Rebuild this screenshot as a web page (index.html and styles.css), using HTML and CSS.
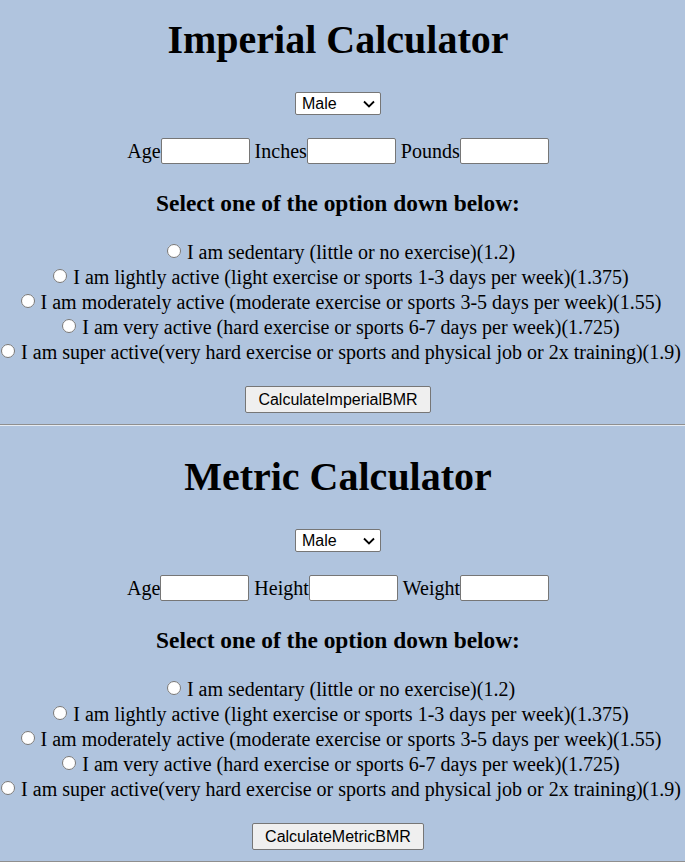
FILE: index.html
```html
<!DOCTYPE html>
<html>
<head>
<meta charset="utf-8">
<title>BMR Calculator</title>
<link rel="stylesheet" href="styles.css">
</head>
<body>
<section class="calc">
  <div class="head">
    <h1 class="title">Imperial Calculator</h1>
    <span class="selwrap">
      <select class="sex"><option>Male</option><option>Female</option></select>
      <svg class="chev" width="12" height="8" viewBox="0 0 12 8"><path d="M1 1.5 L6 6.5 L11 1.5" fill="none" stroke="#000" stroke-width="1.8"/></svg>
    </span>
    <div class="fields">
      <span class="lbl">Age</span><input class="num" type="text">
      <span class="lbl sp">Inches</span><input class="num" type="text">
      <span class="lbl sp">Pounds</span><input class="num" type="text">
    </div>
    <h3 class="ask">Select one of the option down below:</h3>
  </div>
  <div class="opts">
    <div class="opt"><input type="radio" name="a1"> I am sedentary (little or no exercise)(1.2)</div>
    <div class="opt"><input type="radio" name="a1"> I am lightly active (light exercise or sports 1-3 days per week)(1.375)</div>
    <div class="opt"><input type="radio" name="a1"> I am moderately active (moderate exercise or sports 3-5 days per week)(1.55)</div>
    <div class="opt"><input type="radio" name="a1"> I am very active (hard exercise or sports 6-7 days per week)(1.725)</div>
    <div class="opt"><input type="radio" name="a1"> I am super active(very hard exercise or sports and physical job or 2x training)(1.9)</div>
  </div>
  <div class="act"><button class="btn" type="button">CalculateImperialBMR</button></div>
  <hr class="rule">
</section>
<section class="calc">
  <div class="head">
    <h1 class="title">Metric Calculator</h1>
    <span class="selwrap">
      <select class="sex"><option>Male</option><option>Female</option></select>
      <svg class="chev" width="12" height="8" viewBox="0 0 12 8"><path d="M1 1.5 L6 6.5 L11 1.5" fill="none" stroke="#000" stroke-width="1.8"/></svg>
    </span>
    <div class="fields">
      <span class="lbl">Age</span><input class="num" type="text">
      <span class="lbl sp">Height</span><input class="num" type="text">
      <span class="lbl sp">Weight</span><input class="num" type="text">
    </div>
    <h3 class="ask">Select one of the option down below:</h3>
  </div>
  <div class="opts">
    <div class="opt"><input type="radio" name="a2"> I am sedentary (little or no exercise)(1.2)</div>
    <div class="opt"><input type="radio" name="a2"> I am lightly active (light exercise or sports 1-3 days per week)(1.375)</div>
    <div class="opt"><input type="radio" name="a2"> I am moderately active (moderate exercise or sports 3-5 days per week)(1.55)</div>
    <div class="opt"><input type="radio" name="a2"> I am very active (hard exercise or sports 6-7 days per week)(1.725)</div>
    <div class="opt"><input type="radio" name="a2"> I am super active(very hard exercise or sports and physical job or 2x training)(1.9)</div>
  </div>
  <div class="act"><button class="btn" type="button">CalculateMetricBMR</button></div>
  <hr class="rule">
</section>
</body>
</html>
```
FILE: styles.css
```css
html, body {
  margin: 0;
  padding: 0;
  background: #b0c4de;
}
body {
  font-family: "Liberation Serif", "Times New Roman", serif;
  font-size: 20px;
  color: #000;
  overflow: hidden;
}
.calc {
  display: flex;
  flex-direction: column;
}
.head {
  display: flex;
  flex-direction: column;
  align-items: center;
  padding-right: 9px;
}
.title {
  font-size: 40px;
  font-weight: bold;
  line-height: 46px;
  margin: 17px 0 0;
  white-space: nowrap;
}
.selwrap {
  position: relative;
  display: block;
  margin-top: 29px;
  height: 23px;
}
.sex {
  display: block;
  box-sizing: border-box;
  width: 86px;
  height: 23px;
  margin: 0;
  -webkit-appearance: none;
  appearance: none;
  font-family: "Liberation Sans", Arial, sans-serif;
  font-size: 16px;
  line-height: 21px;
  color: #000;
  background: #fff;
  border: 1px solid #767676;
  border-radius: 2px;
  padding: 0 0 0 6px;
}
.chev {
  position: absolute;
  right: 6px;
  top: 8px;
  pointer-events: none;
}
.fields {
  margin-top: 23px;
  display: flex;
  align-items: center;
  height: 26px;
}
.lbl {
  line-height: 23px;
}
.sp {
  margin-left: 5px;
}
.num {
  box-sizing: border-box;
  width: 89px;
  height: 26px;
  margin: 0;
  border: 1px solid #767676;
  border-radius: 2px;
  background: #fff;
  padding: 1px 2px;
}
.ask {
  font-size: 23.4px;
  font-weight: bold;
  line-height: 27px;
  margin: 26px 0 0;
  white-space: nowrap;
}
.opts {
  margin-top: 23px;
  padding-right: 4px;
}
.opt {
  display: flex;
  justify-content: center;
  align-items: flex-start;
  line-height: 25px;
  height: 25px;
  white-space: pre;
}
.opt input {
  width: 14px;
  height: 14px;
  margin: 4px 1px 0 1px;
  flex: none;
}
.act {
  display: flex;
  justify-content: center;
  padding-right: 9px;
  margin-top: 21px;
}
.btn {
  box-sizing: border-box;
  height: 27px;
  padding: 0 12px;
  font-family: "Liberation Sans", Arial, sans-serif;
  font-size: 16px;
  color: #000;
  background: #efefef;
  border: 1px solid #767676;
  border-radius: 2px;
  white-space: nowrap;
}
.rule {
  margin: 11px 0 11px;
  border: 0;
  border-top: 1px solid #8f8f8f;
  border-bottom: 1px solid #e6ecf3;
  height: 0;
}
```
